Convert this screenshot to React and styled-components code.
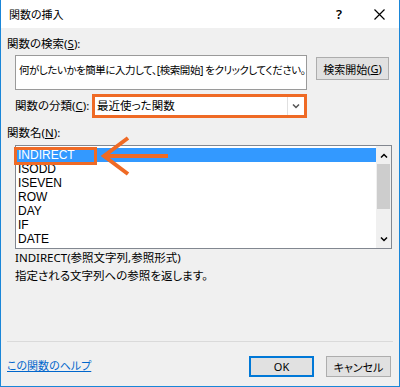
import styled, { createGlobalStyle } from "styled-components";

const Global = createGlobalStyle`
  body {
    margin: 0;
    background: #ffffff;
  }
`;

const ORANGE = "#ef6a25";
const JP = `"Segoe UI", "Noto Sans", "Noto Sans CJK JP", sans-serif`;

const Window = styled.div`
  width: 400px;
  height: 387px;
  box-sizing: border-box;
  border: 1px solid #1a86d8;
  border-top: none;
  display: flex;
  flex-direction: column;
  font-family: ${JP};
  font-size: 11px;
  font-feature-settings: "palt";
  color: #000;
  overflow: hidden;
`;

const TitleBar = styled.div`
  height: 28px;
  flex: none;
  background: #fff;
  display: flex;
  align-items: center;
  padding-left: 8px;
`;

const Title = styled.div`
  flex: 1;
  font-size: 11px;
`;

const Control = styled.div`
  width: 40px;
  height: 28px;
  display: flex;
  align-items: center;
  justify-content: center;
  font-family: "Noto Sans", sans-serif;
  font-size: 13px;
  font-weight: 600;
`;

const Body = styled.div`
  flex: 1;
  background: #f0f0f0;
  padding: 0 6px;
  display: flex;
  flex-direction: column;
`;

const Label = styled.div`
  margin-top: ${(p) => p.$top || 0}px;
  width: ${(p) => (p.$w ? `${p.$w}px` : "auto")};
  flex: none;
  line-height: 16px;
  font-size: 11.5px;
`;

const Indent = styled.div`
  display: flex;
  align-items: ${(p) => p.$align || "flex-start"};
  padding-left: 8px;
  margin-top: ${(p) => p.$top || 0}px;
`;

const SearchBox = styled.div`
  width: 292px;
  height: 35px;
  box-sizing: border-box;
  border: 1px solid #9a9a9a;
  background: #fff;
  padding: 6px 3px;
  line-height: 16px;
  font-size: 10.5px;
  letter-spacing: -0.45px;
  white-space: nowrap;
  overflow: hidden;
`;

const Button = styled.div`
  width: ${(p) => p.$w || 65}px;
  height: ${(p) => p.$h || 21}px;
  box-sizing: border-box;
  margin-left: ${(p) => p.$left || 0}px;
  margin-top: ${(p) => p.$top || 0}px;
  background: #e1e1e1;
  border: 1px solid ${(p) => (p.$primary ? "#0078d7" : "#adadad")};
  box-shadow: ${(p) => (p.$primary ? "inset 0 0 0 1px #0078d7" : "none")};
  display: flex;
  align-items: center;
  justify-content: center;
  font-size: 11px;
  white-space: nowrap;
  flex: none;
`;

const Select = styled.div`
  width: 215px;
  height: 24px;
  box-sizing: border-box;
  border: 3px solid ${ORANGE};
  background: #fff;
  display: flex;
  align-items: stretch;
`;

const SelectText = styled.div`
  flex: 1;
  padding-left: 2px;
  line-height: 18px;
  font-size: 11.5px;
`;

const SelectArrow = styled.div`
  width: 16px;
  border-left: 1px solid #e0e0e0;
  display: flex;
  align-items: center;
  justify-content: center;
`;

const ListWrap = styled.div`
  position: relative;
  margin: 4px 0 0 8px;
  width: 377px;
  height: 104px;
`;

const ListBox = styled.div`
  width: 100%;
  height: 100%;
  box-sizing: border-box;
  border: 1px solid #828790;
  background: #fff;
  display: flex;
`;

const Rows = styled.div`
  flex: 1;
  padding-top: 2px;
  font-family: "Liberation Sans", Arial, sans-serif;
  font-size: 12px;
`;

const Row = styled.div`
  height: 14px;
  line-height: 14px;
  padding-left: 2px;
  background: ${(p) => (p.$selected ? "#3399ff" : "transparent")};
  color: ${(p) => (p.$selected ? "#fff" : "#000")};
`;

const Scrollbar = styled.div`
  width: 15px;
  background: #f0f0f0;
  display: flex;
  flex-direction: column;
`;

const ScrollArrow = styled.div`
  height: 18px;
  display: flex;
  align-items: center;
  justify-content: center;
`;

const Thumb = styled.div`
  height: 45px;
  margin: 0 1px;
  background: #cdcdcd;
`;

const Track = styled.div`
  flex: 1;
`;

const Highlight = styled.div`
  position: absolute;
  left: -1px;
  top: 2px;
  width: 83px;
  height: 18px;
  box-sizing: border-box;
  border: 3px solid ${ORANGE};
`;

const Pointer = styled.svg`
  position: absolute;
  left: 85px;
  top: -9px;
`;

const Desc = styled.div`
  padding-left: 8px;
  line-height: 18px;
  font-size: 11.5px;
`;

const Spacer = styled.div`
  flex: 1;
`;

const Separator = styled.div`
  height: 1px;
  background: #dadada;
`;

const Footer = styled.div`
  height: 44px;
  display: flex;
  align-items: flex-start;
  padding-top: 14px;
  box-sizing: border-box;
  padding-right: 2px;
`;

const HelpLink = styled.a`
  flex: 1;
  margin-top: 2px;
  color: #0066cc;
  text-decoration: underline;
  line-height: 16px;
  font-size: 11px;
`;

const Chevron = ({ up, color = "#000" }) => (
  <svg width="8" height="5" viewBox="0 0 8 5">
    <path
      d={up ? "M1 4.5 L4 1.5 L7 4.5" : "M1 0.5 L4 3.5 L7 0.5"}
      fill="none"
      stroke={color}
      strokeWidth="1.5"
    />
  </svg>
);

const functions = ["INDIRECT", "ISODD", "ISEVEN", "ROW", "DAY", "IF", "DATE"];

function App() {
  return (
    <>
      <Global />
      <Window>
        <TitleBar>
          <Title>関数の挿入</Title>
          <Control>?</Control>
          <Control>
            <svg width="11" height="11" viewBox="0 0 11 11">
              <path d="M0.5 0.5 L10.5 10.5 M10.5 0.5 L0.5 10.5" stroke="#000" strokeWidth="1.2" />
            </svg>
          </Control>
        </TitleBar>
        <Body>
          <Label $top={8}>
            関数の検索(<u>S</u>):
          </Label>
          <Indent $top={3}>
            <SearchBox>何がしたいかを簡単に入力して、[検索開始] をクリックしてください。</SearchBox>
            <Button $w={73} $h={23} $left={9} $top={2}>
              検索開始(<u>G</u>)
            </Button>
          </Indent>
          <Indent $top={4} $align="center">
            <Label $w={77}>
              関数の分類(<u>C</u>):
            </Label>
            <Select>
              <SelectText>最近使った関数</SelectText>
              <SelectArrow>
                <Chevron color="#555" />
              </SelectArrow>
            </Select>
          </Indent>
          <Label $top={7}>
            関数名(<u>N</u>):
          </Label>
          <ListWrap>
            <ListBox>
              <Rows>
                {functions.map((f, i) => (
                  <Row key={f} $selected={i === 0}>
                    {f}
                  </Row>
                ))}
              </Rows>
              <Scrollbar>
                <ScrollArrow>
                  <Chevron up />
                </ScrollArrow>
                <Thumb />
                <Track />
                <ScrollArrow>
                  <Chevron />
                </ScrollArrow>
              </Scrollbar>
            </ListBox>
            <Highlight />
            <Pointer width="72" height="40" viewBox="0 0 72 40">
              <path d="M28 2 L4 20 L28 38" fill="none" stroke={ORANGE} strokeWidth="4" />
              <path d="M5 20 L68 20" stroke={ORANGE} strokeWidth="4" />
            </Pointer>
          </ListWrap>
          <Desc>
            INDIRECT(参照文字列,参照形式)
            <br />
            指定される文字列への参照を返します。
          </Desc>
          <Spacer />
          <Separator />
          <Footer>
            <HelpLink>この関数のヘルプ</HelpLink>
            <Button $primary>OK</Button>
            <Button $left={12}>キャンセル</Button>
          </Footer>
        </Body>
      </Window>
    </>
  );
}

export default App;
